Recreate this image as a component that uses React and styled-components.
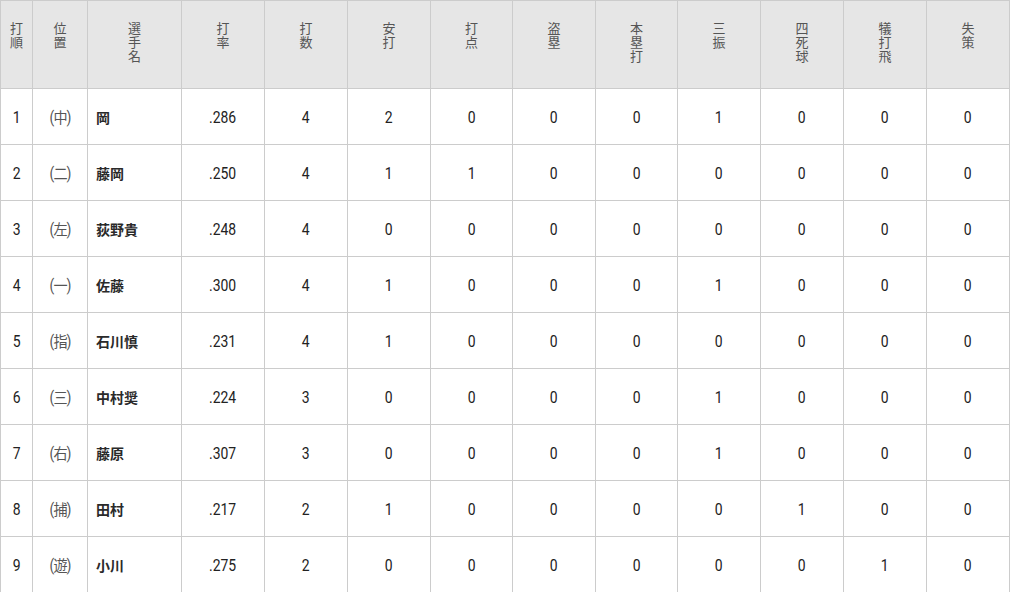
import styled, { createGlobalStyle } from "styled-components";

const GlobalStyle = createGlobalStyle`
    html, body {
        margin: 0;
        padding: 0;
        background: #fff;
    }
    body {
        font-family: Roboto, "Noto Sans CJK JP", sans-serif;
    }
`;

const columns = [
    { label: "打順", width: 32 },
    { label: "位置", width: 55 },
    { label: "選手名", width: 94 },
    { label: "打率", width: 83 },
    { label: "打数", width: 83 },
    { label: "安打", width: 83 },
    { label: "打点", width: 82 },
    { label: "盗塁", width: 83 },
    { label: "本塁打", width: 82 },
    { label: "三振", width: 83 },
    { label: "四死球", width: 83 },
    { label: "犠打飛", width: 83 },
    { label: "失策", width: 83 },
];

const players = [
    ["1", "中", "岡", ".286", 4, 2, 0, 0, 0, 1, 0, 0, 0],
    ["2", "二", "藤岡", ".250", 4, 1, 1, 0, 0, 0, 0, 0, 0],
    ["3", "左", "荻野貴", ".248", 4, 0, 0, 0, 0, 0, 0, 0, 0],
    ["4", "一", "佐藤", ".300", 4, 1, 0, 0, 0, 1, 0, 0, 0],
    ["5", "指", "石川慎", ".231", 4, 1, 0, 0, 0, 0, 0, 0, 0],
    ["6", "三", "中村奨", ".224", 3, 0, 0, 0, 0, 1, 0, 0, 0],
    ["7", "右", "藤原", ".307", 3, 0, 0, 0, 0, 1, 0, 0, 0],
    ["8", "捕", "田村", ".217", 2, 1, 0, 0, 0, 0, 1, 0, 0],
    ["9", "遊", "小川", ".275", 2, 0, 0, 0, 0, 0, 0, 1, 0],
];

const App = () => {
    return (
        <>
            <GlobalStyle />
            <Table>
                <colgroup>
                    {columns.map((c) => (
                        <col key={c.label} style={{ width: c.width }} />
                    ))}
                </colgroup>
                <thead>
                    <tr>
                        {columns.map((c) => (
                            <Head key={c.label}>
                                {c.label.split("").map((ch, i) => (
                                    <HeadChar key={i}>{ch}</HeadChar>
                                ))}
                            </Head>
                        ))}
                    </tr>
                </thead>
                <tbody>
                    {players.map(([order, pos, name, avg, ...stats]) => (
                        <Row key={order}>
                            <Cell>
                                <Num>{order}</Num>
                            </Cell>
                            <Cell $muted>
                                <Num>
                                    (<Kanji>{pos}</Kanji>)
                                </Num>
                            </Cell>
                            <NameCell>{name}</NameCell>
                            <Cell>
                                <Num>{avg}</Num>
                            </Cell>
                            {stats.map((s, i) => (
                                <Cell key={i}>
                                    <Num>{s}</Num>
                                </Cell>
                            ))}
                        </Row>
                    ))}
                </tbody>
            </Table>
        </>
    );
};

export default App;

const Table = styled.table`
    width: 1009px;
    border-collapse: collapse;
    table-layout: fixed;
`;

const Head = styled.th`
    height: 67px;
    padding: 20px 0 0;
    vertical-align: top;
    background: #e6e6e6;
    border: 1px solid #cccccc;
    color: #555;
    font-family: "Noto Sans CJK JP", sans-serif;
    font-weight: 400;
    font-size: 13px;
    line-height: 14px;
`;

const HeadChar = styled.span`
    display: block;
    height: 14px;
`;

const Row = styled.tr`
    height: 56px;
`;

const Cell = styled.td`
    padding: 0;
    border: 1px solid #cccccc;
    text-align: center;
    vertical-align: middle;
    font-size: 17px;
    color: ${(p) => (p.$muted ? "#555" : "#222")};
`;

const Num = styled.span`
    display: inline-block;
    transform: scaleX(0.82);
`;

const Kanji = styled.span`
    font-family: "Noto Sans CJK JP", sans-serif;
    font-size: 15px;
    display: inline-block;
    transform: scaleX(1.15);
`;

const NameCell = styled.td`
    padding: 0 0 0 8px;
    border: 1px solid #cccccc;
    text-align: left;
    vertical-align: middle;
    font-family: "Noto Sans CJK JP", sans-serif;
    font-weight: 600;
    font-size: 14px;
    color: #2a2a2a;
`;
